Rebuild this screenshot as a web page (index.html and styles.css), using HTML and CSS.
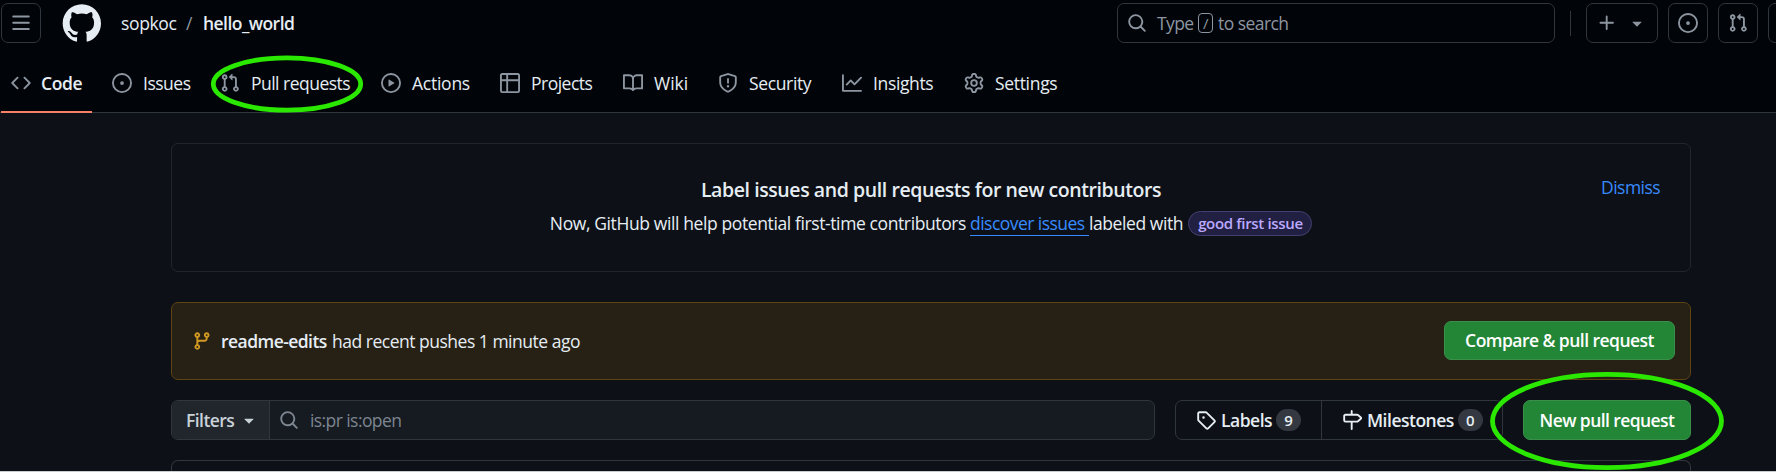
FILE: index.html
```html
<!DOCTYPE html>
<html lang="en">
<head>
<meta charset="utf-8">
<title>Pull requests · sopkoc/hello_world</title>
<link rel="stylesheet" href="styles.css">
</head>
<body>
<svg class="sprite" aria-hidden="true">
  <symbol id="bars" viewBox="0 0 16 16"><path d="M1 2.75A.75.75 0 0 1 1.75 2h12.5a.75.75 0 0 1 0 1.5H1.75A.75.75 0 0 1 1 2.75Zm0 5A.75.75 0 0 1 1.75 7h12.5a.75.75 0 0 1 0 1.5H1.75A.75.75 0 0 1 1 7.75ZM1.75 12h12.5a.75.75 0 0 1 0 1.5H1.75a.75.75 0 0 1 0-1.5Z"/></symbol>
  <symbol id="mark" viewBox="0 0 24 24"><path d="M12.5.75C6.146.75 1 5.896 1 12.25c0 5.089 3.292 9.387 7.863 10.91.575.101.79-.244.79-.546 0-.273-.014-1.178-.014-2.142-2.889.532-3.636-.704-3.866-1.35-.13-.331-.69-1.352-1.18-1.625-.402-.216-.977-.748-.014-.762.906-.014 1.553.834 1.769 1.179 1.035 1.74 2.688 1.25 3.349.948.1-.747.402-1.25.733-1.538-2.559-.287-5.232-1.279-5.232-5.678 0-1.25.445-2.285 1.178-3.09-.115-.288-.517-1.467.115-3.048 0 0 .963-.302 3.163 1.179.92-.259 1.897-.388 2.875-.388.977 0 1.955.13 2.875.388 2.2-1.495 3.162-1.179 3.162-1.179.633 1.581.23 2.76.115 3.048.733.805 1.179 1.825 1.179 3.09 0 4.413-2.688 5.39-5.247 5.678.417.36.776 1.05.776 2.128 0 1.538-.014 2.774-.014 3.162 0 .302.216.662.79.547C20.709 21.637 24 17.324 24 12.25 24 5.896 18.854.75 12.5.75Z"/></symbol>
  <symbol id="code" viewBox="0 0 16 16"><path d="m11.28 3.22 4.25 4.25a.75.75 0 0 1 0 1.06l-4.25 4.25a.749.749 0 0 1-1.275-.326.749.749 0 0 1 .215-.734L13.94 8l-3.72-3.72a.749.749 0 0 1 .326-1.275.749.749 0 0 1 .734.215Zm-6.56 0a.751.751 0 0 1 1.042.018.751.751 0 0 1 .018 1.042L2.06 8l3.72 3.72a.749.749 0 0 1-.326 1.275.749.749 0 0 1-.734-.215L.47 8.53a.75.75 0 0 1 0-1.06Z"/></symbol>
  <symbol id="issue" viewBox="0 0 16 16"><path d="M8 9.5a1.5 1.5 0 1 0 0-3 1.5 1.5 0 0 0 0 3Z"/><path d="M8 0a8 8 0 1 1 0 16A8 8 0 0 1 8 0ZM1.5 8a6.5 6.5 0 1 0 13 0 6.5 6.5 0 0 0-13 0Z"/></symbol>
  <symbol id="pull" viewBox="0 0 16 16"><path d="M1.5 3.25a2.25 2.25 0 1 1 3 2.122v5.256a2.251 2.251 0 1 1-1.5 0V5.372A2.25 2.25 0 0 1 1.5 3.25Zm5.677-.177L9.573.677A.25.25 0 0 1 10 .854V2.5h1A2.5 2.5 0 0 1 13.5 5v5.628a2.251 2.251 0 1 1-1.5 0V5a1 1 0 0 0-1-1h-1v1.646a.25.25 0 0 1-.427.177L7.177 3.427a.25.25 0 0 1 0-.354ZM3.75 2.5a.75.75 0 1 0 0 1.5.75.75 0 0 0 0-1.5Zm0 9.5a.75.75 0 1 0 0 1.5.75.75 0 0 0 0-1.5Zm8.25.75a.75.75 0 1 0 1.5 0 .75.75 0 0 0-1.5 0Z"/></symbol>
  <symbol id="play" viewBox="0 0 16 16"><path d="M8 0a8 8 0 1 1 0 16A8 8 0 0 1 8 0ZM1.5 8a6.5 6.5 0 1 0 13 0 6.5 6.5 0 0 0-13 0Zm4.879-2.773 4.264 2.559a.25.25 0 0 1 0 .428l-4.264 2.559A.25.25 0 0 1 6 10.559V5.442a.25.25 0 0 1 .379-.215Z"/></symbol>
  <symbol id="table" viewBox="0 0 16 16"><path d="M0 1.75C0 .784.784 0 1.75 0h12.5C15.216 0 16 .784 16 1.75v12.5A1.75 1.75 0 0 1 14.25 16H1.75A1.75 1.75 0 0 1 0 14.25ZM6.5 6.5v8h7.75a.25.25 0 0 0 .25-.25V6.5Zm8-1.5V1.75a.25.25 0 0 0-.25-.25H6.5V5Zm-13 1.5v7.75c0 .138.112.25.25.25H5v-8ZM5 5V1.5H1.75a.25.25 0 0 0-.25.25V5Z"/></symbol>
  <symbol id="book" viewBox="0 0 16 16"><path d="M0 1.75A.75.75 0 0 1 .75 1h4.253c1.227 0 2.317.59 3 1.501A3.743 3.743 0 0 1 11.006 1h4.245a.75.75 0 0 1 .75.75v10.5a.75.75 0 0 1-.75.75h-4.507a2.25 2.25 0 0 0-1.591.659l-.622.621a.75.75 0 0 1-1.06 0l-.622-.621A2.25 2.25 0 0 0 5.258 13H.75a.75.75 0 0 1-.75-.75Zm7.251 10.324.004-5.073-.002-2.253A2.25 2.25 0 0 0 5.003 2.5H1.5v9h3.757a3.75 3.75 0 0 1 1.994.574ZM8.755 4.75l-.004 7.322a3.752 3.752 0 0 1 1.992-.572H14.5v-9h-3.495a2.25 2.25 0 0 0-2.25 2.25Z"/></symbol>
  <symbol id="shield" viewBox="0 0 16 16"><path d="M7.467.133a1.748 1.748 0 0 1 1.066 0l5.25 1.68A1.75 1.75 0 0 1 15 3.48V7c0 1.566-.32 3.182-1.303 4.682-.983 1.498-2.585 2.813-5.032 3.855a1.697 1.697 0 0 1-1.33 0c-2.447-1.042-4.049-2.357-5.032-3.855C1.32 10.182 1 8.566 1 7V3.48a1.75 1.75 0 0 1 1.217-1.667Zm.61 1.429a.25.25 0 0 0-.153 0l-5.25 1.68a.25.25 0 0 0-.174.238V7c0 1.358.275 2.666 1.057 3.86.784 1.194 2.121 2.34 4.366 3.297a.196.196 0 0 0 .154 0c2.245-.956 3.582-2.104 4.366-3.298C13.225 9.666 13.5 8.36 13.5 7V3.48a.251.251 0 0 0-.174-.237l-5.25-1.68ZM8.75 4.75v3a.75.75 0 0 1-1.5 0v-3a.75.75 0 0 1 1.5 0ZM9 10.5a1 1 0 1 1-2 0 1 1 0 0 1 2 0Z"/></symbol>
  <symbol id="graph" viewBox="0 0 16 16"><path d="M1.5 1.75V13.5h13.75a.75.75 0 0 1 0 1.5H.75a.75.75 0 0 1-.75-.75V1.75a.75.75 0 0 1 1.5 0Zm14.28 2.53-5.25 5.25a.75.75 0 0 1-1.06 0L7 7.06 4.28 9.78a.751.751 0 0 1-1.042-.018.751.751 0 0 1-.018-1.042l3.25-3.25a.75.75 0 0 1 1.06 0L10 7.94l4.72-4.72a.751.751 0 0 1 1.042.018.751.751 0 0 1 .018 1.042Z"/></symbol>
  <symbol id="gear" viewBox="0 0 16 16"><path d="M8 0a8.2 8.2 0 0 1 .701.031C9.444.095 9.99.645 10.16 1.29l.288 1.107c.018.066.079.158.212.224.231.114.454.243.668.386.123.082.233.09.299.071l1.103-.303c.644-.176 1.392.021 1.82.63.27.385.506.792.704 1.218.315.675.111 1.422-.364 1.891l-.814.806c-.049.048-.098.147-.088.294.016.257.016.515 0 .772-.01.147.038.246.088.294l.814.806c.475.469.679 1.216.364 1.891a7.977 7.977 0 0 1-.704 1.217c-.428.61-1.176.807-1.82.63l-1.102-.302c-.067-.019-.177-.011-.3.071a5.909 5.909 0 0 1-.668.386c-.133.066-.194.158-.211.224l-.29 1.106c-.168.646-.715 1.196-1.458 1.26a8.006 8.006 0 0 1-1.402 0c-.743-.064-1.289-.614-1.458-1.26l-.289-1.106c-.018-.066-.079-.158-.212-.224a5.738 5.738 0 0 1-.668-.386c-.123-.082-.233-.09-.299-.071l-1.103.303c-.644.176-1.392-.021-1.82-.63a8.12 8.12 0 0 1-.704-1.218c-.315-.675-.111-1.422.363-1.891l.815-.806c.05-.048.098-.147.088-.294a6.214 6.214 0 0 1 0-.772c.01-.147-.038-.246-.088-.294l-.815-.806C.635 6.045.431 5.298.746 4.623a7.92 7.92 0 0 1 .704-1.217c.428-.61 1.176-.807 1.82-.63l1.102.302c.067.019.177.011.3-.071.214-.143.437-.272.668-.386.133-.066.194-.158.211-.224l.29-1.106C6.009.645 6.556.095 7.299.03 7.53.01 7.764 0 8 0Zm-.571 1.525c-.036.003-.108.036-.137.146l-.289 1.105c-.147.561-.549.967-.998 1.189-.173.086-.34.183-.5.29-.417.278-.97.423-1.529.27l-1.103-.303c-.109-.03-.175.016-.195.045-.22.312-.412.644-.573.99-.014.031-.021.11.059.19l.815.806c.411.406.562.957.53 1.456a4.709 4.709 0 0 0 0 .582c.032.499-.119 1.05-.53 1.456l-.815.806c-.081.08-.073.159-.059.19.162.346.353.677.573.989.02.03.085.076.195.046l1.102-.303c.56-.153 1.113-.008 1.53.27.161.107.328.204.501.29.447.222.85.629.997 1.189l.289 1.105c.029.109.101.143.137.146a6.6 6.6 0 0 0 1.142 0c.036-.003.108-.036.137-.146l.289-1.105c.147-.561.549-.967.998-1.189.173-.086.34-.183.5-.29.417-.278.97-.423 1.529-.27l1.103.303c.109.029.175-.016.195-.045.22-.313.411-.644.573-.99.014-.031.021-.11-.059-.19l-.815-.806c-.411-.406-.562-.957-.53-1.456a4.709 4.709 0 0 0 0-.582c-.032-.499.119-1.05.53-1.456l.815-.806c.081-.08.073-.159.059-.19a6.464 6.464 0 0 0-.573-.989c-.02-.03-.085-.076-.195-.046l-1.102.303c-.56.153-1.113.008-1.53-.27a4.44 4.44 0 0 0-.501-.29c-.447-.222-.85-.629-.997-1.189l-.289-1.105c-.029-.11-.101-.143-.137-.146a6.6 6.6 0 0 0-1.142 0ZM11 8a3 3 0 1 1-6 0 3 3 0 0 1 6 0ZM9.5 8a1.5 1.5 0 1 0-3.001.001A1.5 1.5 0 0 0 9.5 8Z"/></symbol>
  <symbol id="search" viewBox="0 0 16 16"><path d="M10.68 11.74a6 6 0 0 1-7.922-8.982 6 6 0 0 1 8.982 7.922l3.04 3.04a.749.749 0 0 1-.326 1.275.749.749 0 0 1-.734-.215ZM11.5 7a4.499 4.499 0 1 0-8.997 0A4.499 4.499 0 0 0 11.5 7Z"/></symbol>
  <symbol id="plus" viewBox="0 0 16 16"><path d="M7.75 2a.75.75 0 0 1 .75.75V7h4.25a.75.75 0 0 1 0 1.5H8.5v4.25a.75.75 0 0 1-1.5 0V8.5H2.75a.75.75 0 0 1 0-1.5H7V2.75A.75.75 0 0 1 7.75 2Z"/></symbol>
  <symbol id="caret" viewBox="0 0 16 16"><path d="m4.427 7.427 3.396 3.396a.25.25 0 0 0 .354 0l3.396-3.396A.25.25 0 0 0 11.396 7H4.604a.25.25 0 0 0-.177.427Z"/></symbol>
  <symbol id="branch" viewBox="0 0 16 16"><path d="M9.5 3.25a2.25 2.25 0 1 1 3 2.122V6A2.5 2.5 0 0 1 10 8.5H6a1 1 0 0 0-1 1v1.128a2.251 2.251 0 1 1-1.5 0V5.372a2.25 2.25 0 1 1 1.5 0v1.836A2.493 2.493 0 0 1 6 7h4a1 1 0 0 0 1-1v-.628A2.25 2.25 0 0 1 9.5 3.25Zm-6 0a.75.75 0 1 0 1.5 0 .75.75 0 0 0-1.5 0Zm8.25-.75a.75.75 0 1 0 0 1.5.75.75 0 0 0 0-1.5ZM4.25 12a.75.75 0 1 0 0 1.5.75.75 0 0 0 0-1.5Z"/></symbol>
  <symbol id="tag" viewBox="0 0 16 16"><path d="M1 7.775V2.75C1 1.784 1.784 1 2.75 1h5.025c.464 0 .91.184 1.238.513l6.25 6.25a1.75 1.75 0 0 1 0 2.474l-5.026 5.026a1.75 1.75 0 0 1-2.474 0l-6.25-6.25A1.752 1.752 0 0 1 1 7.775Zm1.5 0c0 .066.026.13.073.177l6.25 6.25a.25.25 0 0 0 .354 0l5.025-5.025a.25.25 0 0 0 0-.354l-6.25-6.25a.25.25 0 0 0-.177-.073H2.75a.25.25 0 0 0-.25.25ZM6 5a1 1 0 1 1 0 2 1 1 0 0 1 0-2Z"/></symbol>
  <symbol id="milestone" viewBox="0 0 16 16"><path d="M7.75 0a.75.75 0 0 1 .75.75V3h3.634c.414 0 .814.147 1.13.414l2.07 1.75a1.75 1.75 0 0 1 0 2.672l-2.07 1.75a1.75 1.75 0 0 1-1.13.414H8.5v5.25a.75.75 0 0 1-1.5 0V10H2.75A1.75 1.75 0 0 1 1 8.25v-3.5C1 3.784 1.784 3 2.75 3H7V.75A.75.75 0 0 1 7.75 0Zm4.384 8.5a.25.25 0 0 0 .161-.06l2.07-1.75a.248.248 0 0 0 0-.38l-2.07-1.75a.25.25 0 0 0-.161-.06H2.75a.25.25 0 0 0-.25.25v3.5c0 .138.112.25.25.25h9.384Z"/></symbol>
</svg>

<header class="header">
  <div class="topbar">
    <button class="square"><svg class="icon"><use href="#bars"/></svg></button>
    <svg class="logo"><use href="#mark"/></svg>
    <div class="crumbs"><span class="owner">sopkoc</span><span class="slash">/</span><span class="repo">hello_world</span></div>
    <div class="search"><svg class="icon"><use href="#search"/></svg><span class="type">Type</span><kbd class="key">/</kbd><span class="to-search">to search</span></div>
    <div class="divider"></div>
    <div class="actions">
      <button class="square create"><svg class="icon"><use href="#plus"/></svg><svg class="icon"><use href="#caret"/></svg></button>
      <button class="square"><svg class="icon"><use href="#issue"/></svg></button>
      <button class="square"><svg class="icon"><use href="#pull"/></svg></button>
      <button class="square"></button>
    </div>
  </div>
  <nav class="tabs">
    <a class="tab tab-active"><svg class="icon"><use href="#code"/></svg><span class="t-code">Code</span></a>
    <a class="tab"><svg class="icon"><use href="#issue"/></svg><span class="t-issues">Issues</span></a>
    <a class="tab tab-pulls"><svg class="icon"><use href="#pull"/></svg><span class="t-pulls">Pull requests</span>
      <svg class="ring ring-tab" viewBox="0 0 154 58"><ellipse cx="77" cy="29" rx="73.7" ry="26.2"/></svg></a>
    <a class="tab"><svg class="icon"><use href="#play"/></svg><span class="t-actions">Actions</span></a>
    <a class="tab"><svg class="icon"><use href="#table"/></svg><span class="t-projects">Projects</span></a>
    <a class="tab"><svg class="icon"><use href="#book"/></svg><span class="t-wiki">Wiki</span></a>
    <a class="tab"><svg class="icon"><use href="#shield"/></svg><span class="t-security">Security</span></a>
    <a class="tab"><svg class="icon"><use href="#graph"/></svg><span class="t-insights">Insights</span></a>
    <a class="tab"><svg class="icon"><use href="#gear"/></svg><span class="t-settings">Settings</span></a>
  </nav>
</header>

<main class="content">
  <section class="notice">
    <h2 class="notice-title">Label issues and pull requests for new contributors</h2>
    <div class="notice-line"><span class="lead">Now, GitHub will help potential first-time contributors</span><a class="discover">discover issues</a><span class="with">labeled with</span><span class="pill">good first issue</span></div>
    <a class="dismiss">Dismiss</a>
  </section>

  <section class="pushed">
    <svg class="icon"><use href="#branch"/></svg>
    <b class="branch-name">readme-edits</b><span class="pushed-text">had recent pushes 1 minute ago</span>
    <button class="primary compare">Compare &amp; pull request</button>
  </section>

  <section class="toolbar">
    <div class="filter">
      <button class="filters"><span>Filters</span><svg class="icon"><use href="#caret"/></svg></button>
      <div class="query"><svg class="icon"><use href="#search"/></svg><span>is:pr is:open</span></div>
    </div>
    <div class="group">
      <a class="group-item labels"><svg class="icon"><use href="#tag"/></svg><span class="name">Labels</span><span class="count">9</span></a>
      <a class="group-item"><svg class="icon"><use href="#milestone"/></svg><span class="name">Milestones</span><span class="count">0</span></a>
    </div>
    <div class="new-wrap">
      <button class="primary new">New pull request</button>
      <svg class="ring ring-new" viewBox="0 0 236 100"><ellipse cx="118" cy="50" rx="114.5" ry="46.6"/></svg>
    </div>
  </section>

  <section class="list"></section>
</main>
</body>
</html>
```
FILE: styles.css
```css
* { box-sizing: border-box; }
body {
  margin: 0;
  height: 472px;
  overflow: hidden;
  display: flex;
  flex-direction: column;
  background: #0d1117;
  border-bottom: 1px solid #c9cbcd;
  color: #e6edf3;
  font: 17.5px/26px "Open Sans", "Noto Sans", sans-serif;
  letter-spacing: -0.5px;
  white-space: nowrap;
}
button { font: inherit; letter-spacing: inherit; color: inherit; padding: 0; margin: 0; }
.sprite { display: none; }
.icon { width: 20px; height: 20px; flex: none; fill: currentColor; display: block; }

/* header */
.header { background: #010409; border-bottom: 1px solid #30363d; height: 113px; flex: none; }
.topbar { display: flex; align-items: center; height: 43px; padding: 3px 0 0 1px; overflow: hidden; }
.square {
  display: flex; align-items: center; justify-content: center; flex: none;
  width: 40px; height: 40px; background: none;
  border: 1px solid #30363d; border-radius: 7px; color: #8d96a0;
}
.logo { width: 40px; height: 40px; flex: none; margin-left: 20px; fill: #e6edf3; }
.crumbs { display: flex; margin-left: 20px; width: 996px; flex: none; }
.owner { width: 65px; letter-spacing: -0.35px; }
.slash { width: 17px; color: #8d96a0; }
.repo { font-weight: 600; letter-spacing: -0.55px; }
.search {
  display: flex; align-items: center; flex: none;
  width: 438px; height: 40px; padding-left: 9px;
  border: 1px solid #30363d; border-radius: 7px; color: #8d96a0;
}
.type { margin-left: 10px; width: 41px; letter-spacing: -0.6px; }
.key {
  width: 15px; height: 20px; border: 1px solid #8d96a0; border-radius: 4px;
  font: 15px/18px "Open Sans", sans-serif; text-align: center; margin-right: 5px;
}
.to-search { letter-spacing: -0.55px; }
.divider { width: 1px; height: 25px; background: #30363d; margin: 0 15px; flex: none; }
.actions { display: flex; gap: 10px; flex: none; }
.create { width: 72px; gap: 10px; }

.tabs { display: flex; gap: 10px; padding: 10px 0 0 1px; height: 70px; }
.tab { position: relative; display: flex; align-items: center; gap: 11px; height: 60px; padding: 0 10px; }
.tab .icon { color: #8d96a0; }
.tab-active { font-weight: 600; border-bottom: 2px solid #f78166; padding-top: 2px; gap: 10px; }
.t-code { width: 41px; letter-spacing: -0.4px; }
.t-issues { width: 47px; letter-spacing: -0.5px; }
.t-pulls { width: 100px; letter-spacing: -0.52px; }
.t-actions { width: 58px; letter-spacing: -0.25px; }
.t-projects { width: 62px; letter-spacing: -0.5px; }
.t-wiki { width: 34px; letter-spacing: 0; }
.t-security { width: 63px; letter-spacing: -0.36px; }
.t-insights { width: 61px; letter-spacing: -0.36px; }
.t-settings { width: 63px; letter-spacing: -0.32px; }

/* highlight rings lie over the page */
.ring { position: absolute; fill: none; stroke: #2be800; stroke-width: 4.8; z-index: 2; pointer-events: none; }
.ring-tab { width: 154px; height: 58px; left: 0; top: 2px; }
.ring-new { width: 236px; height: 100px; left: -34px; top: -29px; }

/* content */
.content { width: 1520px; margin: 30px 0 0 171px; display: flex; flex-direction: column; }
.notice {
  position: relative; height: 129px; border: 1px solid #21262d; border-radius: 7px;
  display: flex; flex-direction: column; align-items: center; padding-top: 31px;
}
.notice-title { margin: 0; font-size: 19.5px; line-height: 30px; font-weight: 600; letter-spacing: -0.42px; }
.notice-line { display: flex; align-items: center; margin-top: 5px; }
.lead { letter-spacing: -0.39px; margin-right: 4px; }
.discover { color: #388bfd; width: 119px; letter-spacing: -0.54px; line-height: 23px; margin-bottom: -1px; border-bottom: 1px solid #388bfd; }
.with { letter-spacing: -0.42px; margin-right: 5px; }
.pill {
  height: 25px; width: 124px; padding: 0 9px; border: 1px solid #443f70; border-radius: 13px;
  background: #211f42; color: #bba9ff; font-size: 15px; line-height: 23px; font-weight: 600; letter-spacing: -0.34px;
}
.dismiss { position: absolute; right: 30px; top: 30px; letter-spacing: -0.55px; color: #388bfd; }

.pushed {
  display: flex; align-items: center; height: 78px; margin-top: 30px; padding: 0 15px 0 20px;
  background: #272115; border: 1px solid #5d4411; border-radius: 7px;
}
.pushed .icon { color: #d29922; }
.branch-name { font-weight: 600; margin: 0 4px 0 9px; width: 107px; letter-spacing: -0.55px; }
.pushed-text { letter-spacing: -0.49px; }
.primary {
  height: 40px; background: #238636; border: 1px solid #3a9049; border-radius: 7px;
  color: #fff; font-weight: 600; text-align: center; line-height: 37px;
}
.compare { width: 231px; height: 39px; margin: 0 0 1px auto; letter-spacing: -0.54px; }

.toolbar { display: flex; height: 40px; margin-top: 20px; }
.filter { display: flex; width: 984px; border: 1px solid #30363d; border-radius: 7px; background: #161b22; overflow: hidden; }
.filters {
  display: flex; align-items: center; width: 98px; padding-left: 14px; gap: 4px;
  background: #21262d; border: 0; border-right: 1px solid #30363d; color: #c9d1d9; font-weight: 600;
}
.filters span { width: 49px; padding-bottom: 1px; text-align: left; letter-spacing: -0.55px; }
.query { display: flex; align-items: center; gap: 11px; padding-left: 9px; color: #7d8590; letter-spacing: -0.58px; }
.group { display: flex; margin-left: 20px; width: 328px; border: 1px solid #30363d; border-radius: 7px; }
.group-item { display: flex; align-items: center; padding-left: 20px; font-weight: 600; }
.labels { width: 146px; border-right: 1px solid #30363d; }
.name { margin: 0 4px 0 5px; }
.count {
  width: 25px; height: 22px; border-radius: 11px; background: #343941;
  font-size: 15px; line-height: 22px; text-align: center; letter-spacing: 0;
}
.new-wrap { position: relative; margin-left: auto; }
.new { width: 168px; display: block; letter-spacing: -0.58px; }
.list { height: 11px; margin-top: 20px; border: 1px solid #30363d; border-bottom: 0; border-radius: 7px 7px 0 0; flex: none; }
```
